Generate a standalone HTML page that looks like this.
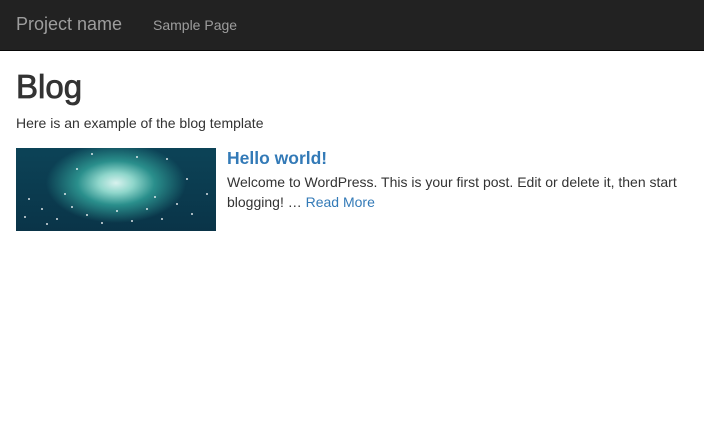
<!DOCTYPE html>
<html><head><style>
body{margin:0;width:704px;height:442px;background:#fff;font-family:"Liberation Sans",Arial,sans-serif;color:#333;position:relative;overflow:hidden}
.nav{position:absolute;left:0;top:0;width:704px;height:50px;background:#222;border-bottom:1px solid #080808}
.brand{position:absolute;left:16px;top:14px;font-size:18px;line-height:20px;color:#9d9d9d}
.link{position:absolute;left:153px;top:15px;font-size:14px;line-height:20px;color:#9d9d9d}
h1{position:absolute;left:16px;top:67px;margin:0;font-size:33px;line-height:40px;font-weight:normal;-webkit-text-stroke:0.8px #333;color:#333}
.sub{position:absolute;left:16px;top:113px;font-size:14px;line-height:20px}
.img{position:absolute;left:16px;top:148px;width:200px;height:83px;background:radial-gradient(ellipse 70px 40px at 100px 35px,#d8f2ee 0%,#8fd6cb 25%,#2a8f8c 55%,rgba(15,70,90,0) 100%),linear-gradient(#0c4357,#0a3448);overflow:hidden}
.img i{position:absolute;width:2px;height:2px;background:#fff;border-radius:1px;opacity:.85}
h4{position:absolute;left:227px;top:147px;margin:0;font-size:17.5px;line-height:22px;font-weight:bold;color:#337ab7}
.p{position:absolute;left:227px;top:172px;width:470px;font-size:14px;line-height:20px}
.p a{color:#337ab7;text-decoration:none}
</style></head><body>
<div class="nav"><div class="brand">Project name</div><div class="link">Sample Page</div></div>
<h1>Blog</h1>
<div class="sub">Here is an example of the blog template</div>
<div class="img">
<i style="left:12px;top:50px"></i><i style="left:25px;top:60px"></i><i style="left:40px;top:70px"></i><i style="left:55px;top:58px"></i><i style="left:30px;top:75px"></i><i style="left:70px;top:66px"></i><i style="left:85px;top:74px"></i><i style="left:100px;top:62px"></i><i style="left:115px;top:72px"></i><i style="left:130px;top:60px"></i><i style="left:145px;top:70px"></i><i style="left:160px;top:55px"></i><i style="left:175px;top:65px"></i><i style="left:190px;top:45px"></i><i style="left:170px;top:30px"></i><i style="left:60px;top:20px"></i><i style="left:150px;top:10px"></i><i style="left:8px;top:68px"></i><i style="left:48px;top:45px"></i><i style="left:138px;top:48px"></i><i style="left:120px;top:8px"></i><i style="left:75px;top:5px"></i>
</div>
<h4>Hello world!</h4>
<div class="p">Welcome to WordPress. This is your first post. Edit or delete it, then start blogging! … <a>Read More</a></div>
</body></html>
